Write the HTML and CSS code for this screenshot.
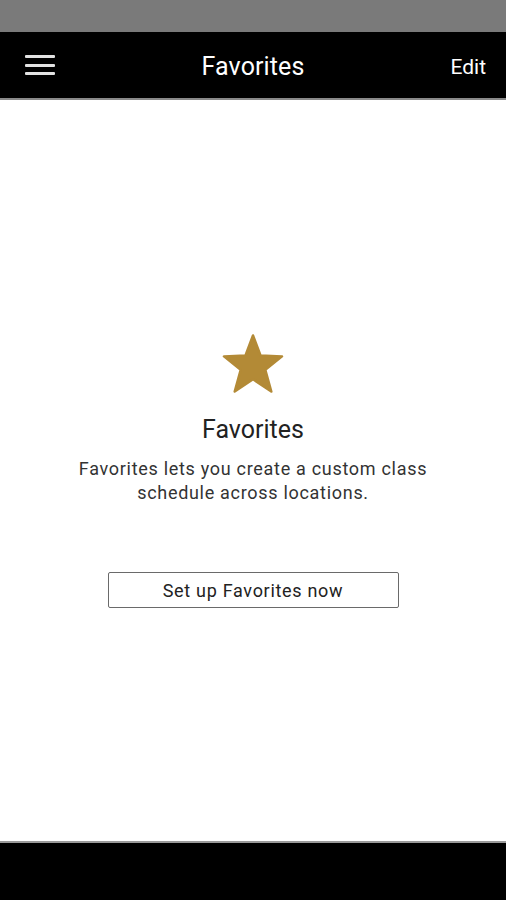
FILE: index.html
```html
<!DOCTYPE html>
<html>
<head>
<meta charset="utf-8">
<link rel="stylesheet" href="styles.css">
</head>
<body>
<div class="app">
  <div class="statusbar"></div>
  <header class="toolbar">
    <div class="menu">
      <span class="bar"></span><span class="bar"></span><span class="bar"></span>
    </div>
    <h1 class="title">Favorites</h1>
    <div class="edit">Edit</div>
  </header>
  <main class="content">
    <svg class="star" width="62" height="60" viewBox="0 0 62 60">
      <path d="M31 1.5 L38.6 21.6 L60 22.4 L43.3 35.8 L49.3 57.5 L31 45.2 L12.7 57.5 L18.7 35.8 L2 22.4 L23.4 21.6 Z" fill="#b38a36" stroke="#b38a36" stroke-width="2.5" stroke-linejoin="round"/>
    </svg>
    <h2 class="heading">Favorites</h2>
    <p class="desc">Favorites lets you create a custom class<br>schedule across locations.</p>
    <button class="setup">Set up Favorites now</button>
  </main>
  <footer class="navbar"></footer>
</div>
</body>
</html>
```
FILE: styles.css
```css
html, body {
  margin: 0;
  padding: 0;
  background: #fff;
}
body {
  font-family: Roboto, "Noto Sans", sans-serif;
}
.app {
  width: 506px;
  height: 900px;
  display: flex;
  flex-direction: column;
}
.statusbar {
  height: 32px;
  background: #7a7a7a;
  flex: none;
}
.toolbar {
  height: 66px;
  background: #000;
  border-bottom: 2px solid #8a8a8a;
  flex: none;
  display: flex;
  align-items: center;
  justify-content: space-between;
  padding: 0 20px 0 25px;
  position: relative;
}
.menu {
  width: 30px;
  display: flex;
  flex-direction: column;
  gap: 5.5px;
}
.bar {
  display: block;
  height: 3px;
  background: #e2e2e2;
  border-radius: 1px;
}
.title {
  position: absolute;
  left: 0;
  right: 0;
  top: 3px;
  bottom: 0;
  display: flex;
  align-items: center;
  justify-content: center;
  margin: 0;
  color: #fff;
  font-size: 25px;
  font-weight: 400;
  letter-spacing: 0.1px;
  pointer-events: none;
}
.edit {
  color: #fff;
  font-size: 21px;
  font-weight: 400;
  padding-top: 3px;
}
.content {
  flex: 1;
  display: flex;
  flex-direction: column;
  align-items: center;
  padding-top: 234px;
}
.star {
  display: block;
}
.heading {
  margin: 21px 0 0;
  font-size: 25px;
  font-weight: 400;
  color: #222;
  line-height: 30px;
}
.desc {
  margin: 12px 0 0;
  font-size: 18px;
  letter-spacing: 0.7px;
  line-height: 24px;
  color: #333;
  text-align: center;
}
.setup {
  margin-top: 67px;
  width: 291px;
  height: 36px;
  background: #fff;
  border: 1.5px solid #6a6a6a;
  border-radius: 2px;
  font-family: Roboto, "Noto Sans", sans-serif;
  font-size: 18px;
  letter-spacing: 0.7px;
  color: #222;
  padding: 0;
}
.navbar {
  height: 57px;
  background: #000;
  border-top: 2px solid #9a9a9a;
  flex: none;
}
```
